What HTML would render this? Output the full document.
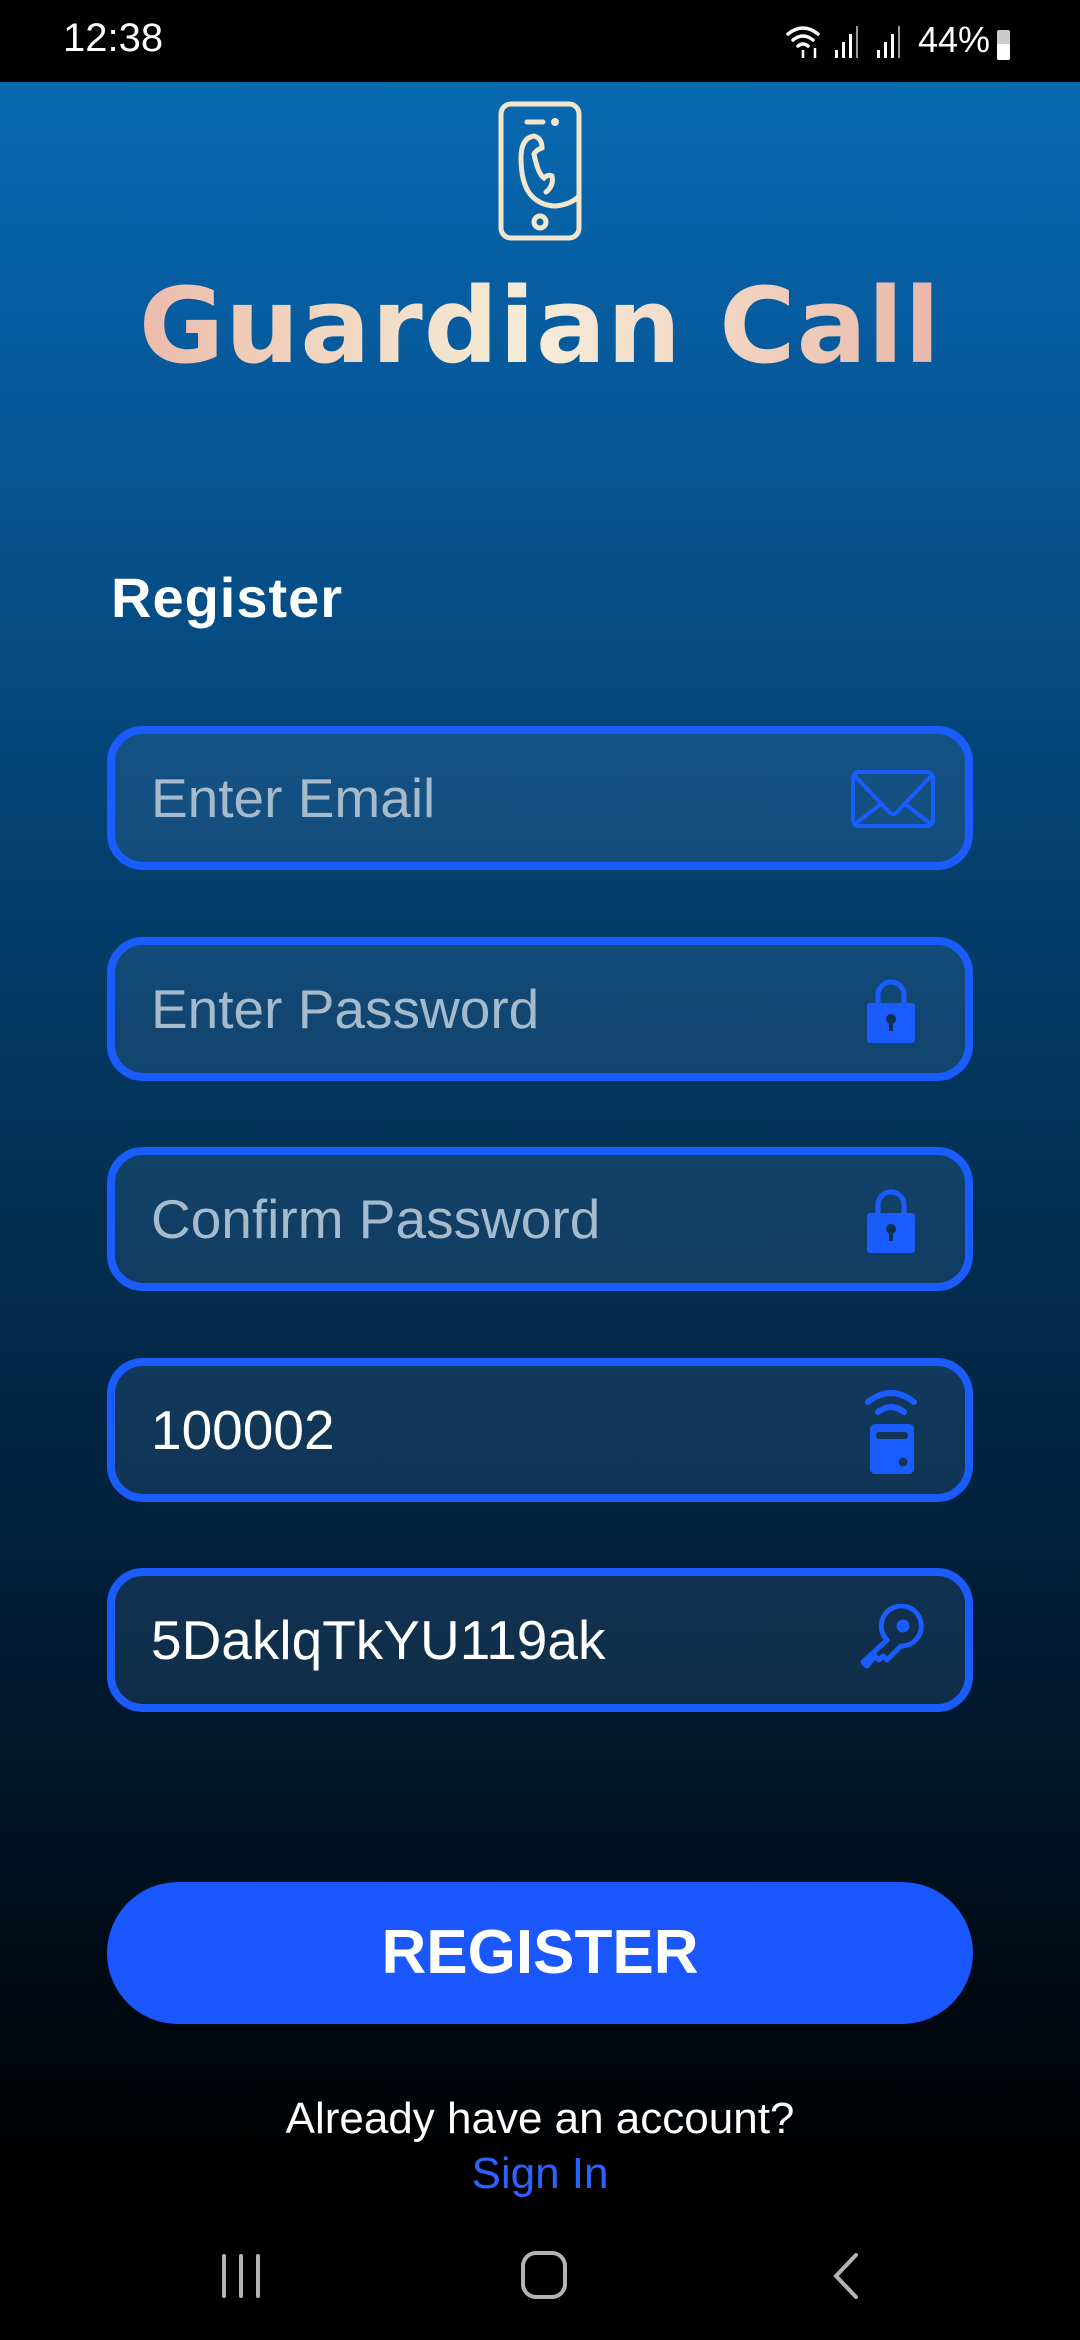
<!DOCTYPE html>
<html><head><meta charset="utf-8"><style>
*{margin:0;padding:0;box-sizing:border-box}
body{width:1080px;height:2340px;overflow:hidden;font-family:"Liberation Sans",sans-serif;background:#000;position:relative}
.bg{position:absolute;left:0;top:82px;width:1080px;height:2258px;background:linear-gradient(180deg,#0769b0 0%,#065797 15%,#043f6d 35%,#022a4a 55%,#01162a 75%,#000 92%,#000 100%)}
.status{position:absolute;left:0;top:0;width:1080px;height:82px;background:#000;color:#fff}
.abs{position:absolute}
.title{position:absolute;left:0;width:1080px;top:274px;text-align:center;font-family:"DejaVu Sans",sans-serif;font-weight:bold;font-size:104px;letter-spacing:1px;line-height:1;background:linear-gradient(90deg,#e9a79d 0%,#f1d6c0 30%,#f5ecd8 50%,#efcab8 75%,#e6a39a 100%);-webkit-background-clip:text;background-clip:text;color:transparent}
.reg{left:111px;top:565px;font-size:56px;font-weight:bold;color:#fff;letter-spacing:1px}
.inp{position:absolute;left:107px;width:866px;height:144px;border:8px solid #1b5cff;border-radius:36px;background:rgba(90,140,190,0.18)}
.inp span{position:absolute;left:36px;top:0;line-height:128px;font-size:55px;color:#a5bacb}
.inp span.v{color:#fff}
.inp svg{position:absolute}
.btn{position:absolute;left:107px;top:1882px;width:866px;height:142px;border-radius:71px;background:#1a57ff;color:#fff;text-align:center;line-height:142px;font-weight:bold;font-size:62px}
.txt{position:absolute;left:0;width:1080px;text-align:center;font-size:44px}
</style></head><body>
<div class="bg"></div>
<div class="status">
<div class="abs" style="left:63px;top:16px;font-size:40px">12:38</div>
<svg class="abs" style="left:785px;top:22px" width="235" height="40" viewBox="0 0 235 40">
<g fill="none" stroke="#fff" stroke-width="3.5" stroke-linecap="round"><path d="M3 12 Q18 0 33 12"/><path d="M8 18 Q18 10 28 18"/><path d="M13 24 Q18 20 23 24"/></g>
<path d="M18 28v8M30 26v10" stroke="#fff" stroke-width="2.5"/>
<g fill="#fff"><rect x="50" y="28" width="3" height="8"/><rect x="57" y="20" width="3" height="16"/><rect x="64" y="12" width="3" height="24"/><rect x="71" y="4" width="2" height="32" opacity=".6"/>
<rect x="92" y="28" width="3" height="8"/><rect x="99" y="20" width="3" height="16"/><rect x="106" y="12" width="3" height="24"/><rect x="113" y="4" width="2" height="32" opacity=".6"/></g>
<text x="133" y="30" fill="#fff" font-size="36" font-family="Liberation Sans">44%</text>
<rect x="212" y="8" width="13" height="30" rx="2" fill="#ccc"/><rect x="212" y="22" width="13" height="16" rx="2" fill="#fff"/>
</svg>
</div>
<svg class="abs" style="left:496px;top:100px" width="88" height="142" viewBox="0 0 88 142" fill="none" stroke="#f3e6cf" stroke-width="5" stroke-linecap="round">
<rect x="5" y="4" width="78" height="134" rx="10"/>
<path d="M31 22h16"/><circle cx="59" cy="22" r="1.5" fill="#f3e6cf"/>
<path d="M38 36 Q25 38 25 58 Q25 82 34 94 Q44 106 60 106 Q76 104 83 96"/>
<path d="M38 36 Q46 38 46 48 Q40 50 38 54 Q42 74 48 78 Q52 74 56 76 Q58 86 50 92"/>
<circle cx="44" cy="122" r="6"/>
</svg>
<div class="title">Guardian Call</div>
<div class="abs reg">Register</div>

<div class="inp" style="top:726px"><span>Enter Email</span>
<svg style="left:736px;top:36px" width="84" height="58" viewBox="0 0 84 58" fill="none" stroke="#1b5cff" stroke-width="4"><rect x="2" y="2" width="80" height="54" rx="6"/><path d="M4 6 L38 42 Q42 46 46 42 L80 6"/><path d="M4 54 L30 34M80 54 L54 34"/></svg></div>

<div class="inp" style="top:937px"><span>Enter Password</span>
<svg style="left:750px;top:34px" width="52" height="64" viewBox="0 0 52 64"><path d="M13 26V16a13 13 0 0 1 26 0v10" fill="none" stroke="#1b5cff" stroke-width="5"/><rect x="2" y="24" width="48" height="40" rx="3" fill="#1b5cff"/><circle cx="26" cy="40" r="5" fill="#0f2f55"/><rect x="24" y="40" width="4" height="12" fill="#0f2f55"/></svg></div>

<div class="inp" style="top:1147px"><span>Confirm Password</span>
<svg style="left:750px;top:34px" width="52" height="64" viewBox="0 0 52 64"><path d="M13 26V16a13 13 0 0 1 26 0v10" fill="none" stroke="#1b5cff" stroke-width="5"/><rect x="2" y="24" width="48" height="40" rx="3" fill="#1b5cff"/><circle cx="26" cy="40" r="5" fill="#0f2f55"/><rect x="24" y="40" width="4" height="12" fill="#0f2f55"/></svg></div>

<div class="inp" style="top:1358px"><span class="v">100002</span>
<svg style="left:748px;top:20px" width="56" height="92" viewBox="0 0 56 92"><g fill="none" stroke="#1b5cff" stroke-width="6" stroke-linecap="round"><path d="M5 16 Q28 -2 51 16"/><path d="M15 26 Q28 16 41 26"/></g><rect x="7" y="38" width="44" height="50" rx="5" fill="#1b5cff"/><rect x="13" y="46" width="32" height="7" rx="3" fill="#163455"/><circle cx="40" cy="76" r="4.5" fill="#163455"/></svg></div>

<div class="inp" style="top:1568px"><span class="v">5DaklqTkYU119ak</span>
<svg style="left:744px;top:28px" width="66" height="70" viewBox="0 0 66 70" fill="none" stroke="#1b5cff" stroke-width="5" stroke-linejoin="round"><path d="M28 36 A20 20 0 1 1 42 42 L28 56 L24 52 L20 56 L16 52 L8 62 L4 58 Z"/><circle cx="44" cy="22" r="4" fill="#1b5cff"/></svg></div>

<div class="btn">REGISTER</div>
<div class="txt" style="top:2094px;color:#fff">Already have an account?</div>
<div class="txt" style="top:2149px;color:#2a63ff">Sign In</div>

<svg class="abs" style="left:0;top:2240px" width="1080" height="70" viewBox="0 0 1080 70" fill="none" stroke="#b4b4b4" stroke-width="4" stroke-linecap="round">
<path d="M224 16v40M241 16v40M258 16v40"/>
<rect x="523" y="13" width="42" height="44" rx="13"/>
<path d="M856 15 L836 36 L856 57"/>
</svg>
</body></html>
